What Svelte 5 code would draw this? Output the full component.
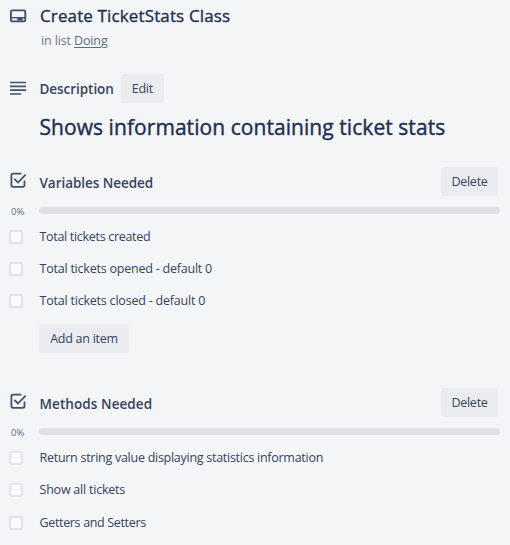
<script>
  const checklists = [
    {
      title: 'Variables Needed',
      tracking: -0.05,
      items: [
        { text: 'Total tickets created', tracking: -0.31 },
        { text: 'Total tickets opened - default 0', tracking: -0.22 },
        { text: 'Total tickets closed - default 0', tracking: -0.21 },
      ],
      add: true,
    },
    {
      title: 'Methods Needed',
      tracking: 0.08,
      items: [
        { text: 'Return string value displaying statistics information', tracking: -0.27 },
        { text: 'Show all tickets', tracking: -0.22 },
        { text: 'Getters and Setters', tracking: -0.34 },
      ],
      add: false,
    },
  ];
</script>

<main class="card">
  <header class="title-row">
    <svg class="icon" width="18" height="14" viewBox="0 0 18 14">
      <rect x="1.9" y="1.4" width="14.4" height="11" rx="1.4" fill="none" stroke="#42526e" stroke-width="1.9" />
      <path d="M2 8h14v1.4H2z" fill="#42526e" />
      <path d="M8.3 9h5.4v2.6H8.3z" fill="#42526e" />
    </svg>
    <h1>Create TicketStats Class</h1>
  </header>
  <p class="in-list">in list <a href="#doing">Doing</a></p>

  <section class="description">
    <div class="description-head">
      <svg class="icon lines" width="18" height="14" viewBox="0 0 18 14">
        <path d="M1 1.5h16M1 5.3h16M1 9.2h16M1 13h11" stroke="#42526e" stroke-width="1.7" />
      </svg>
      <h2>Description</h2>
      <button class="edit">Edit</button>
    </div>
    <p class="summary">Shows information containing ticket stats</p>
  </section>

  {#each checklists as list}
    <section class="checklist">
      <div class="list-head">
        <svg class="icon check" width="18" height="18" viewBox="0 0 18 18">
          <path d="M12.4 2.6H4.1Q2.4 2.6 2.4 4.2v9.9Q2.4 15.8 4.1 15.8h9.8q1.6 0 1.6-1.7V9.4" fill="none" stroke="#42526e" stroke-width="1.8" />
          <path d="M5.4 7.9l3.6 3.6 7.6-7.9" fill="none" stroke="#42526e" stroke-width="1.8" />
        </svg>
        <h2 style:letter-spacing="{list.tracking}px">{list.title}</h2>
        <button class="delete">Delete</button>
      </div>
      <div class="progress">
        <span class="percent">0%</span>
        <div class="bar"></div>
      </div>
      <ul>
        {#each list.items as item}
          <li>
            <span class="box"></span>
            <span style:letter-spacing="{item.tracking}px">{item.text}</span>
          </li>
        {/each}
      </ul>
      {#if list.add}
        <button class="add">Add an item</button>
      {/if}
    </section>
  {/each}
</main>

<style>
  :global(body) { background: #f4f5f7; }
  .card {
    box-sizing: border-box;
    width: 510px;
    height: 545px;
    overflow: hidden;
    background: #f4f5f7;
    color: #34435f;
    font: 12.5px/20px "Open Sans", "Noto Sans", sans-serif;
  }
  h1, h2, p, ul { margin: 0; padding: 0; }
  .icon { flex: none; width: 18px; margin: 0 13px 0 9px; }
  .lines { margin-bottom: 2px; }
  .title-row { display: flex; align-items: center; height: 31px; }
  h1 {
    font-size: 17px;
    line-height: 24px;
    font-weight: 400;
    letter-spacing: 0.13px;
    color: #1f2f50;
    -webkit-text-stroke: 0.35px #1f2f50;
  }
  .in-list { height: 43px; padding-left: 41px; letter-spacing: -0.13px; color: #6b778c; }
  .in-list a { color: #5e6c84; text-decoration: underline; text-underline-offset: 2px; }
  .description-head { display: flex; align-items: center; height: 29px; }
  h2 { margin-left: -0.5px; font-size: 13.5px; line-height: 20px; font-weight: 600; letter-spacing: -0.05px; color: #34435f; }
  .description-head h2 { padding-top: 1px; }
  button {
    height: 29px;
    padding: 0;
    border: 0;
    border-radius: 2px;
    background: #ebecf0;
    color: #34435f;
    font: inherit;
    letter-spacing: -0.26px;
  }
  .edit { width: 43px; margin-left: 7px; }
  .summary {
    height: 64px;
    padding-left: 39.5px;
    font-size: 21px;
    line-height: 49px;
    letter-spacing: 0.06px;
    color: #1f2f50;
    -webkit-text-stroke: 0.4px #1f2f50;
  }
  .checklist { height: 221px; }
  .list-head { display: flex; align-items: center; height: 29px; }
  .list-head h2 { flex: 1; padding-top: 2px; }
  .check { margin-bottom: 3px; }
  .delete { width: 57px; margin-right: 12px; padding-top: 1px; }
  .progress { display: flex; align-items: center; height: 30px; }
  .percent { width: 28px; padding: 2px 0 0 11px; font-size: 9.5px; line-height: 14px; color: #5e6c84; }
  .bar { width: 461px; height: 7px; margin-top: -1px; border-radius: 4px; background: #dfe1e6; }
  ul { margin-top: -5px; list-style: none; }
  li { display: flex; align-items: center; height: 32px; }
  .checklist:last-child li:last-child { padding-top: 1px; }
  .box {
    box-sizing: border-box;
    width: 14px;
    height: 14px;
    margin: 0 16.5px 0 9px;
    border: 2px solid #e2e4e9;
    border-radius: 2px;
    background: #fafbfc;
  }
  .add { display: block; width: 90px; margin: 7px 0 0 39px; }
</style>
